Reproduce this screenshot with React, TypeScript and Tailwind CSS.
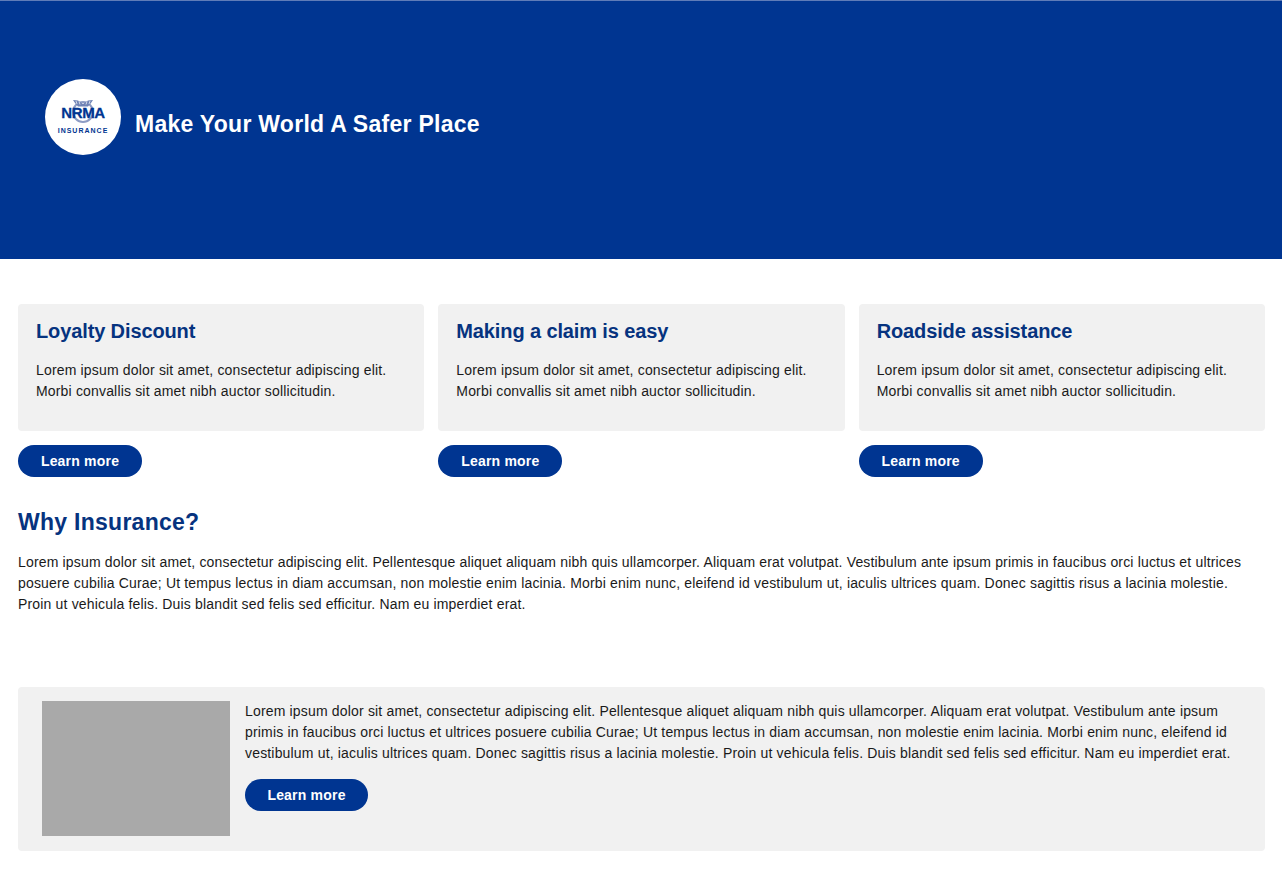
const lorem =
  'Lorem ipsum dolor sit amet, consectetur adipiscing elit. Morbi convallis sit amet nibh auctor sollicitudin.'

const cards = ['Loyalty Discount', 'Making a claim is easy', 'Roadside assistance']

function LearnMore() {
  return (
    <button
      type="button"
      className="flex h-8 w-full items-center justify-center rounded-full bg-[#003591] text-sm font-bold tracking-[0.2px] text-white"
    >
      Learn more
    </button>
  )
}

function Logo() {
  return (
    <div className="relative flex h-[76px] w-[76px] shrink-0 flex-col items-center rounded-full bg-white">
      <svg viewBox="0 0 30 30" className="absolute left-[23px] top-[20px] h-[30px] w-[30px]" fill="none">
        <circle cx="15" cy="13" r="10" stroke="#8d9cc4" strokeWidth="2" />
        <path d="M5 1l5 .5 5 3.5 5-3.5 5-.5-2 3-3 3.5H10L7 4z" fill="#6f83b5" />
        <path d="M8 2l1 3M11 2.5l1 3M19 2.5l-1 3M22 2l-1 3" stroke="#ffffff" strokeWidth="0.7" />
      </svg>
      <span className="relative mt-[25px] text-[15px] font-bold leading-[18px] tracking-[-0.4px] text-[#003591] [-webkit-text-stroke:0.3px_#003591]">
        NRMA
      </span>
      <span className="relative mt-[5px] text-[7px] font-bold leading-[8px] tracking-[1px] text-[#003591]">
        INSURANCE
      </span>
    </div>
  )
}

export default function App() {
  return (
    <div className="min-h-[875px] bg-white font-['Liberation_Sans',Arial,sans-serif] text-sm leading-[21px] tracking-[0.17px] text-[#1a1a1a]">
      <header className="flex h-[259px] items-start gap-[14px] border-t border-[#5f7cb8] bg-[#003591] pl-[45px] pt-[78px]">
        <Logo />
        <h1 className="mt-[31px] text-[23px] font-bold leading-[29px] tracking-[0.27px] text-white">
          Make Your World A Safer Place
        </h1>
      </header>

      <main className="pl-[18px] pr-[17px] pt-[45px]">
        <div className="grid grid-cols-3 gap-[14px]">
          {cards.map((title) => (
            <div key={title}>
              <div className="h-[127px] rounded bg-[#f1f1f1] px-[18px] pt-[15px]">
                <h2 className="text-xl font-bold leading-6 tracking-[-0.12px] text-[#06337f]">{title}</h2>
                <p className="mt-[17px]">{lorem}</p>
              </div>
              <div className="mt-[14px] w-[124px]">
                <LearnMore />
              </div>
            </div>
          ))}
        </div>

        <h2 className="mt-[31px] text-[23px] font-bold leading-[29px] tracking-[0.27px] text-[#06337f]">
          Why Insurance?
        </h2>
        <p className="mt-[15px] pr-5">
          Lorem ipsum dolor sit amet, consectetur adipiscing elit. Pellentesque aliquet aliquam
          nibh quis ullamcorper. Aliquam erat volutpat. Vestibulum ante ipsum primis in faucibus
          orci luctus et ultrices posuere cubilia Curae; Ut tempus lectus in diam accumsan, non
          molestie enim lacinia. Morbi enim nunc, eleifend id vestibulum ut, iaculis ultrices quam.
          Donec sagittis risus a lacinia molestie. Proin ut vehicula felis. Duis blandit sed felis
          sed efficitur. Nam eu imperdiet erat.
        </p>

        <section className="mt-[72px] flex h-[164px] gap-[15px] rounded bg-[#f1f1f1] pl-6 pr-[30px] pt-[14px]">
          <div className="h-[135px] w-[188px] shrink-0 bg-[#a9a9a9]" />
          <div>
            <p>
              Lorem ipsum dolor sit amet, consectetur adipiscing elit. Pellentesque aliquet aliquam
              nibh quis ullamcorper. Aliquam erat volutpat. Vestibulum ante ipsum primis in faucibus
              orci luctus et ultrices posuere cubilia Curae; Ut tempus lectus in diam accumsan, non
              molestie enim lacinia. Morbi enim nunc, eleifend id vestibulum ut, iaculis ultrices
              quam. Donec sagittis risus a lacinia molestie. Proin ut vehicula felis. Duis blandit
              sed felis sed efficitur. Nam eu imperdiet erat.
            </p>
            <div className="mt-[15px] w-[123px]">
              <LearnMore />
            </div>
          </div>
        </section>
      </main>
    </div>
  )
}
